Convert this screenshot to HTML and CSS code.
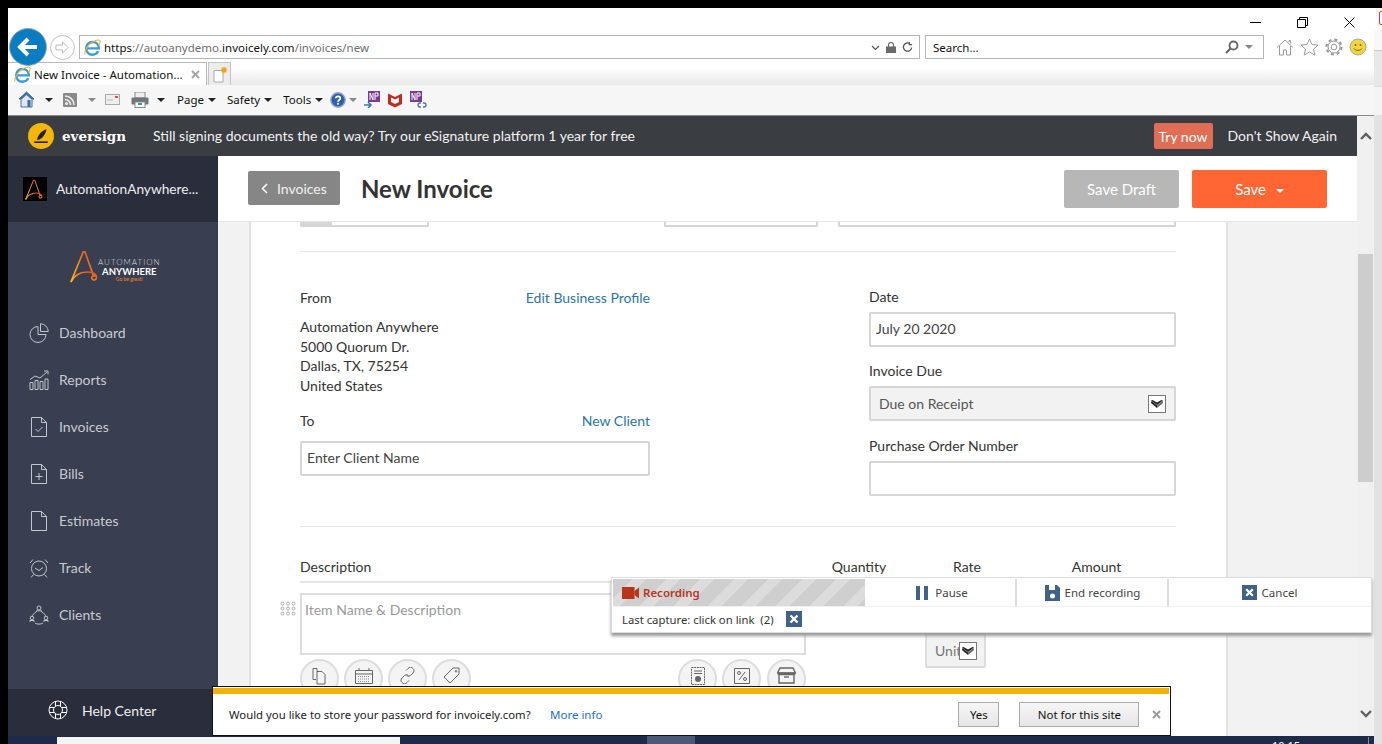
FILE: index.html
```html
<!DOCTYPE html>
<html lang="en">
<head>
  <meta charset="UTF-8" />
  <meta name="viewport" content="width=device-width, initial-scale=1.0" />
  <title>New Invoice - Automation Anywhere</title>
  <link rel="stylesheet" href="styles.css">
</head>
<body>
  <svg class="defs" width="0" height="0">
    <symbol id="ie" viewBox="0 0 20 20">
      <path d="M2.500 11h15C17.500 6.500 14.500 3.500 10 3.500c-4.500 0-7.500 3.500-7.500 7.500s3 7.500 7.500 7.500c3 0 5.500-1.500 6.800-4" fill="none" stroke="#3a9bdc" stroke-width="2.800"/>
      <path d="M1.500 18.500C-1 16 5 6 11 3c4-2 7.500-2.500 8-.5.3 1.500-.8 3.500-1.800 5" fill="none" stroke="#f0b429" stroke-width="1.300"/>
    </symbol>
    <symbol id="a-mark" viewBox="0 0 34 36">
      <path d="M1 35 14.500 2h2L26 29" fill="none" stroke="url(#a-grad)" stroke-width="1.800"/>
      <path d="M1 35c4-8 11-11 18-11 5 0 10 2 10 6 0 3-4 4-5 1-.7-2 1-3 4-3" fill="none" stroke="url(#a-grad)" stroke-width="1.800"/>
    </symbol>
    <linearGradient id="a-grad" x1="0" y1="1" x2="1" y2="0">
      <stop offset="0" stop-color="#ffc21a"/>
      <stop offset="1" stop-color="#e8481c"/>
    </linearGradient>
    <symbol id="caret" viewBox="0 0 16 16">
      <path d="M2 4.500 8 9l6-4.500-1.500-.5L8 6.500 3.500 4z" fill="#222"/>
      <path d="M8 9.500 13.500 5 14 7l-6 5z" fill="#666"/>
      <path d="M8 9.500 2.500 5 2 7l6 5z" fill="#222"/>
    </symbol>
    <symbol id="tbx" viewBox="0 0 16 16">
      <rect width="16" height="16" fill="#40618a"/>
      <path d="m4.500 4.500 7 7m0-7-7 7" stroke="#fff" stroke-width="2.400"/>
    </symbol>
  </svg>

  <div class="screen">
    <div class="desk">
      <div class="ie">
        <div class="titlebar">
          <span class="winbtn"><svg width="11" height="11" viewBox="0 0 11 11"><path d="M0 5.500h11" stroke="#000"/></svg></span>
          <span class="winbtn"><svg width="11" height="11" viewBox="0 0 11 11"><path d="M2.500 2.500v-2h8v8h-2M.500 2.500h8v8h-8z" fill="none" stroke="#000"/></svg></span>
          <span class="winbtn"><svg width="11" height="11" viewBox="0 0 11 11"><path d="m.500.500 10 10m0-10-10 10" stroke="#000"/></svg></span>
        </div>

        <div class="addrrow">
          <span class="nav-back"><svg width="24" height="24" viewBox="0 0 24 24"><path d="M21 12H5M12 4l-8 8 8 8" fill="none" stroke="#fff" stroke-width="4"/></svg></span>
          <span class="nav-fwd"><svg width="15" height="15" viewBox="0 0 16 16"><path d="M1 5.500h7V2l6 6-6 6v-3.500H1z" fill="none" stroke="#b5b5b5"/></svg></span>
          <div class="addr">
            <svg class="ie-icon" width="17" height="17"><use href="#ie"/></svg>
            <span class="url"><b>https</b>://autoanydemo.<b>invoicely.com</b>/invoices/new</span>
            <svg width="9" height="9" viewBox="0 0 9 9"><path d="m1 3 3.500 3.500L8 3" fill="none" stroke="#555" stroke-width="1.200"/></svg>
            <svg width="10" height="11" viewBox="0 0 10 11"><rect y="4.500" width="10" height="6.500" fill="#6a6a6a"/><path d="M2.500 5V3a2.500 2.500 0 0 1 5 0v2" fill="none" stroke="#6a6a6a" stroke-width="1.200"/></svg>
            <svg width="11" height="12" viewBox="0 0 12 12"><path d="M10.500 6.500A4.500 4.500 0 1 1 8.500 2.300M8 .5v3h3" fill="none" stroke="#555" stroke-width="1.400"/></svg>
          </div>
          <div class="search">
            <span class="search-text">Search...</span>
            <svg width="14" height="14" viewBox="0 0 14 14"><circle cx="8.500" cy="5.500" r="4" fill="none" stroke="#666" stroke-width="1.800"/><path d="M5.500 8.500 1 13" stroke="#666" stroke-width="2.200"/></svg>
            <i class="tri tri-grey"></i>
          </div>
          <div class="ie-tools">
            <svg width="18" height="17" viewBox="0 0 18 17"><path d="M1 8.500 9 1l8 7.500M3.500 7v9h4v-5h3v5h4V7M13 3V1.500h1.500V4.500" fill="none" stroke="#9a9a9a"/></svg>
            <svg width="19" height="18" viewBox="0 0 19 18"><path d="m9.500 1 2.500 5.500 6 .6-4.500 4 1.300 6-5.300-3.100-5.300 3.100 1.300-6L1 7.100l6-.6z" fill="none" stroke="#9a9a9a"/></svg>
            <svg width="18" height="18" viewBox="0 0 18 18"><circle cx="9" cy="9" r="2.800" fill="none" stroke="#9a9a9a"/><circle cx="9" cy="9" r="6" fill="none" stroke="#9a9a9a"/><circle cx="9" cy="9" r="7.500" fill="none" stroke="#9a9a9a" stroke-width="2.200" stroke-dasharray="3 2.900"/></svg>
            <svg width="18" height="18" viewBox="0 0 18 18"><circle cx="9" cy="9" r="8" fill="#f2d53c" stroke="#a9a9a9"/><circle cx="6.500" cy="7" r="1" fill="#776a1c"/><circle cx="11.500" cy="7" r="1" fill="#776a1c"/><path d="M5 10.500c1 2.500 7 2.500 8 0" fill="none" stroke="#776a1c"/></svg>
          </div>
        </div>

        <div class="tabrow">
          <div class="tab">
            <svg class="ie-icon" width="17" height="17"><use href="#ie"/></svg>
            <span class="tab-title">New Invoice - Automation...</span>
            <svg width="9" height="9" viewBox="0 0 9 9"><path d="m1 1 7 7m0-7-7 7" stroke="#a5a5a5" stroke-width="2"/></svg>
          </div>
          <div class="newtab"><svg width="16" height="17" viewBox="0 0 16 17"><path d="M2 4.500h9V16H2z" fill="#fff" stroke="#aaa"/><path d="m12 0 .8 2 2-.8-.8 2 2 .8-2 .8.8 2-2-.8-.8 2-.8-2-2 .8.8-2-2-.8 2-.8-.8-2 2 .8z" fill="#f2a31b"/></svg></div>
        </div>

        <div class="cmdbar">
          <svg class="ml3" width="17" height="17" viewBox="0 0 17 17"><path d="M8.500 1 1 8h2v8h11V8h2z" fill="#dfe6ee" stroke="#55708f"/><path d="M8.500 1 1 8h3l4.500-4 4.500 4h3z" fill="#3d6ea5"/><rect x="9.500" y="9" width="3" height="7" fill="#3d6ea5"/></svg>
          <i class="tri ml10"></i>
          <svg class="ml10" width="14" height="14" viewBox="0 0 14 14"><rect width="14" height="14" rx="1" fill="#8a8a8a"/><circle cx="3.500" cy="10.500" r="1.500" fill="#eee"/><path d="M2 6.500a5.500 5.500 0 0 1 5.500 5.500M2 3a9 9 0 0 1 9 9" fill="none" stroke="#eee" stroke-width="1.500"/></svg>
          <i class="tri tri-grey ml11"></i>
          <svg class="ml9" width="15" height="11" viewBox="0 0 15 11"><rect x=".5" y=".5" width="14" height="10" fill="#eee" stroke="#aaa"/><rect x="10" y="2" width="3" height="2" fill="#d9534f"/><path d="M2 6h6" stroke="#bbb"/></svg>
          <svg class="ml11" width="18" height="16" viewBox="0 0 18 16"><rect x="4" y="0" width="10" height="6" fill="#eee" stroke="#888"/><rect x="0.500" y="5.500" width="17" height="7" rx="1" fill="#6f7478"/><rect x="4" y="10" width="10" height="5.500" fill="#fff" stroke="#888"/><path d="M7 12h4" stroke="#3a8fc9" stroke-width="2"/></svg>
          <i class="tri ml8"></i>
          <span class="cmd">Page <i class="tri"></i></span>
          <span class="cmd">Safety <i class="tri"></i></span>
          <span class="cmd">Tools <i class="tri"></i></span>
          <svg class="ml7" width="16" height="16" viewBox="0 0 16 16"><circle cx="8" cy="8" r="7.200" fill="#2e5fb8" stroke="#9aa6b8" stroke-width="1.400"/><path d="M5.800 6.200C6 3.800 10.300 3.800 10.300 6.200 10.300 8 8 8 8 9.800" fill="none" stroke="#fff" stroke-width="1.700"/><rect x="7.100" y="10.800" width="1.800" height="1.800" fill="#fff"/></svg>
          <i class="tri tri-grey ml3"></i>
          <svg class="ml7" width="17" height="17" viewBox="0 0 17 17"><rect x="4" y="0" width="12" height="11" fill="#7b3a96"/><path d="M6 9V2l3 7V2M11 9V2h3v3h-3" fill="none" stroke="#fff"/><path d="M0 14h7M4 11l3 3-3 3" fill="none" stroke="#3d78b5" stroke-width="1.600"/></svg>
          <svg class="ml6" width="16" height="16" viewBox="0 0 16 16"><path d="M1 1.500 8 5l7-3.500V12l-7 3.500L1 12z" fill="#c8281e"/><path d="M4 5.500 8 7.500l4-2V10l-4 2-4-2z" fill="#fff"/></svg>
          <svg class="ml7" width="17" height="17" viewBox="0 0 17 17"><rect x="0" y="0" width="12" height="11" fill="#7b3a96"/><path d="M2 9V2l3 7V2M7 9V2h3v3H7" fill="none" stroke="#fff"/><path d="M8 14a2 2 0 0 1 2-2h1M13 12h1a2 2 0 0 1 0 4h-1M8 14a2 2 0 0 0 2 2h1" fill="none" stroke="#3d78b5" stroke-width="1.300"/></svg>
        </div>

        <div class="page">
          <div class="view">
            <div class="banner">
              <span class="ev-logo"><svg width="18" height="18" viewBox="0 0 16 16"><path d="M13 2C9 3 5 7 4.500 11.500c3.500 0 7-3.500 8.500-9.500z" fill="#222"/><path d="M2 13.500h12" stroke="#222" stroke-width="1.400"/></svg></span>
              <span class="ev-name">eversign</span>
              <span class="ev-text">Still signing documents the old way? Try our eSignature platform 1 year for free</span>
              <button class="try" type="button">Try now</button>
              <span class="noshow">Don't Show Again</span>
            </div>

            <div class="app">
              <aside class="sidebar">
                <div class="account">
                  <span class="acc-logo"><svg width="20" height="21"><use href="#a-mark"/></svg></span>
                  <span class="acc-name">AutomationAnywhere...</span>
                </div>
                <div class="brand">
                  <svg width="31" height="33"><use href="#a-mark"/></svg>
                  <div class="brand-text">
                    <span class="b1">AUTOMATION</span>
                    <span class="b2">ANYWHERE</span>
                    <span class="b3">Go be great!</span>
                  </div>
                </div>
                <nav class="menu">
                  <a class="menu-item"><svg width="20" height="20" viewBox="0 0 20 20"><path d="M9 3.500a8 8 0 1 0 8 8H9z" fill="none" stroke="#c3c6cf"/><path d="M11.500.8c4 0 7.700 3.500 7.700 7.700h-7.700z" fill="none" stroke="#c3c6cf"/></svg>Dashboard</a>
                  <a class="menu-item"><svg width="20" height="20" viewBox="0 0 20 20"><path d="M1 12.500h3v7H1zM6 10.500h3v9H6zM11 11.500h3v8h-3zM16 9h3v10.500h-3zM1 9.500l5-3.500 5 2 7-6M15 1h4v3.500" fill="none" stroke="#c3c6cf"/></svg>Reports</a>
                  <a class="menu-item"><svg width="20" height="20" viewBox="0 0 20 20"><path d="M2.500.5h10l5 5v14h-15zM12.500.5v5h5M6.500 12l2.500 2.500 4.500-4.500" fill="none" stroke="#c3c6cf"/></svg>Invoices</a>
                  <a class="menu-item"><svg width="20" height="20" viewBox="0 0 20 20"><path d="M2.500.5h10l5 5v14h-15zM12.500.5v5h5M10 9v7M6.500 12.500h7" fill="none" stroke="#c3c6cf"/></svg>Bills</a>
                  <a class="menu-item"><svg width="20" height="20" viewBox="0 0 20 20"><path d="M2.500.5h10l5 5v14h-15zM12.500.5v5h5" fill="none" stroke="#c3c6cf"/></svg>Estimates</a>
                  <a class="menu-item"><svg width="20" height="20" viewBox="0 0 20 20"><circle cx="10" cy="10.500" r="7.500" fill="none" stroke="#c3c6cf"/><path d="M6 10l4 2.500 4-3M1 5l3-3.500M19 5l-3-3.500M4.500 16.500 2 19.500M15.500 16.500l2.500 3" fill="none" stroke="#c3c6cf"/></svg>Track</a>
                  <a class="menu-item"><svg width="20" height="20" viewBox="0 0 20 20"><circle cx="10" cy="3" r="2" fill="none" stroke="#c3c6cf"/><circle cx="3" cy="13" r="1.800" fill="none" stroke="#c3c6cf"/><circle cx="17" cy="13" r="1.800" fill="none" stroke="#c3c6cf"/><path d="M7 7c-2 1-3.500 3-4 5M13 7c2 1 3.500 3 4 5M1 17v-1.500h4V17M15 17v-1.500h4V17M6 18c2 1.500 6 1.500 8 0M7.500 7V5.800h5V7" fill="none" stroke="#c3c6cf"/></svg>Clients</a>
                </nav>
                <a class="help"><svg width="20" height="20" viewBox="0 0 20 20"><circle cx="10" cy="10" r="9" fill="none" stroke="#fff"/><circle cx="10" cy="10" r="4.500" fill="none" stroke="#fff"/><path d="M7.500 1.500v4.500M12.500 1.500v4.500M7.500 14v4.500M12.500 14v4.500M1.500 7.500H6M1.500 12.500H6M14 7.500h4.500M14 12.500h4.500" stroke="#fff"/></svg>Help Center</a>
              </aside>

              <main class="main">
                <header class="head">
                  <a class="back"><svg width="7" height="11" viewBox="0 0 7 11"><path d="M6 1 1.500 5.500 6 10" fill="none" stroke="#fff" stroke-width="1.500"/></svg>Invoices</a>
                  <h1 class="head-title">New Invoice</h1>
                  <button class="draft" type="button">Save Draft</button>
                  <button class="save" type="button">Save <i class="tri tri-white"></i></button>
                </header>

                <div class="canvas">
                  <div class="card">
                    <div class="stubs">
                      <span class="stub stub-a"><i></i></span>
                      <span class="stub stub-b"></span>
                      <span class="stub stub-c"></span>
                    </div>
                    <hr class="rule rule-top">

                    <div class="bill">
                      <section class="bill-left">
                        <div class="label-row"><span class="label">From</span><a class="link">Edit Business Profile</a></div>
                        <div class="address">
                          <div>Automation Anywhere</div>
                          <div>5000 Quorum Dr.</div>
                          <div>Dallas, TX, 75254</div>
                          <div>United States</div>
                        </div>
                        <div class="label-row to-row"><span class="label">To</span><a class="link">New Client</a></div>
                        <input class="field client" type="text" placeholder="Enter Client Name">
                      </section>
                      <section class="bill-right">
                        <div class="label">Date</div>
                        <input class="field" type="text" value="July 20 2020">
                        <div class="label gap14">Invoice Due</div>
                        <div class="field picker">Due on Receipt<span class="pick-arrow"><svg width="16" height="16"><use href="#caret"/></svg></span></div>
                        <div class="label gap15">Purchase Order Number</div>
                        <input class="field" type="text">
                      </section>
                    </div>

                    <hr class="rule rule-mid">

                    <div class="items-head">
                      <span class="label col-desc">Description</span>
                      <span class="label col-qty">Quantity</span>
                      <span class="label col-rate">Rate</span>
                      <span class="label col-amt">Amount</span>
                    </div>

                    <div class="item">
                      <div class="item-left">
                        <svg class="drag" width="16" height="15" viewBox="0 0 16 15"><g fill="none" stroke="#aaa"><circle cx="2.500" cy="2.500" r="1.500"/><circle cx="8" cy="2.500" r="1.500"/><circle cx="13.500" cy="2.500" r="1.500"/><circle cx="2.500" cy="7.500" r="1.500"/><circle cx="8" cy="7.500" r="1.500"/><circle cx="13.500" cy="7.500" r="1.500"/><circle cx="2.500" cy="12.500" r="1.500"/><circle cx="8" cy="12.500" r="1.500"/><circle cx="13.500" cy="12.500" r="1.500"/></g></svg>
                        <textarea class="item-name" placeholder="Item Name &amp; Description"></textarea>
                        <div class="item-tools">
                          <span class="round"><svg width="16" height="18" viewBox="0 0 16 18"><path d="M5 4.500V1.500H1v11h3M5 4.500h5l3 3v9.500H5z" fill="none" stroke="#666"/></svg></span>
                          <span class="round"><svg width="18" height="16" viewBox="0 0 18 16"><path d="M.5 2.500h17v13H.5zM.5 6h17M4 0v3M14 0v3" fill="none" stroke="#666"/><path d="M3 8.500h12M3 11h12M3 13.500h12" stroke="#888" stroke-dasharray="1 1"/></svg></span>
                          <span class="round"><svg width="17" height="17" viewBox="0 0 17 17"><path d="m7 3.500 2-2a3 3 0 0 1 5 0 3 3 0 0 1 0 4.500l-2.500 2.500a3 3 0 0 1-4 0M10 13.500l-2 2a3 3 0 0 1-5 0 3 3 0 0 1 0-4.500L5.500 8.500a3 3 0 0 1 4 0" fill="none" stroke="#666"/></svg></span>
                          <span class="round"><svg width="17" height="17" viewBox="0 0 17 17"><path d="M10 1h6v6l-9 9-6-6zM13 3.500a.8.8 0 1 1 0 1.600.8.8 0 0 1 0-1.600z" fill="none" stroke="#666"/></svg></span>
                          <span class="round round-sep"><svg width="14" height="18" viewBox="0 0 14 18"><path d="M.5.500h13v17H.5z" fill="none" stroke="#666" stroke-dasharray="2 .7"/><path d="M3 4h8M3 6.500h8" stroke="#666"/><circle cx="7" cy="12" r="3" fill="#666"/></svg></span>
                          <span class="round"><svg width="16" height="16" viewBox="0 0 16 16"><path d="M.5.500h15v15H.5zM11 4l-6 8" fill="none" stroke="#666"/><circle cx="5" cy="5" r="1.500" fill="none" stroke="#666"/><circle cx="11" cy="11" r="1.500" fill="none" stroke="#666"/></svg></span>
                          <span class="round round-last"><svg width="19" height="17" viewBox="0 0 19 17"><path d="M3 1h13l2.500 5H.5zM2 7.500h15V16H2z" fill="none" stroke="#666" stroke-width="1.400"/><path d="M.5 6.500h18" stroke="#666" stroke-width="2"/><path d="M7 10h5" stroke="#666" stroke-width="1.400"/></svg></span>
                        </div>
                      </div>
                      <div class="unit">Unit<span class="pick-arrow"><svg width="16" height="16"><use href="#caret"/></svg></span></div>
                    </div>
                  </div>
                </div>
              </main>
            </div>
          </div>

          <div class="scroll">
            <svg class="chev-up" width="12" height="8" viewBox="0 0 12 8"><path d="m1 7 5-5 5 5" fill="none" stroke="#606060" stroke-width="2.400"/></svg>
            <div class="thumb"></div>
            <svg class="chev-down" width="12" height="8" viewBox="0 0 12 8"><path d="m1 1 5 5 5-5" fill="none" stroke="#606060" stroke-width="2.400"/></svg>
          </div>
        </div>
      </div>

      <div class="taskbar">
        <span class="task-open"></span>
        <span class="task-lit"></span>
        <span class="clock">10:15</span>
        <span class="task-show"></span>
      </div>
    </div>

    <div class="behind">
      <div class="behind-top"><span class="behind-red"></span></div>
      <div class="behind-a"></div>
      <div class="behind-b"></div>
      <div class="behind-c"></div>
      <div class="behind-d"></div>
    </div>

    <div class="recorder">
      <div class="rec-top">
        <div class="rec-status"><svg width="18" height="12" viewBox="0 0 18 12"><rect width="12.500" height="12" fill="#b8351c"/><path d="M12.500 4 17 .5v11L12.500 8z" fill="#b8351c"/></svg>Recording</div>
        <div class="rec-btn rec-pause"><svg width="12" height="14" viewBox="0 0 12 14"><path d="M0 0h4v14H0zM8 0h4v14H8z" fill="#40618a"/></svg>Pause</div>
        <div class="rec-btn rec-end"><svg width="15" height="16" viewBox="0 0 15 16"><path d="M0 0h12l3 3v13H0z" fill="#40618a"/><rect x="4" y="0" width="6" height="5" fill="#fff"/><circle cx="7.500" cy="11" r="2.500" fill="#fff"/></svg>End recording</div>
        <div class="rec-btn rec-cancel"><svg width="15" height="15"><use href="#tbx"/></svg>Cancel</div>
      </div>
      <div class="rec-bottom">Last capture: click on link&nbsp; (2)<svg width="16" height="16"><use href="#tbx"/></svg></div>
    </div>

    <div class="passbar">
      <div class="pass-strip"></div>
      <div class="pass-body">
        <span class="pass-q">Would you like to store your password for invoicely.com?</span>
        <a class="pass-more">More info</a>
        <button class="pass-btn pass-yes" type="button">Yes</button>
        <button class="pass-btn pass-no" type="button">Not for this site</button>
        <svg class="pass-x" width="9" height="9" viewBox="0 0 9 9"><path d="m1 1 7 7m0-7-7 7" stroke="#9a9a9a" stroke-width="2"/></svg>
      </div>
    </div>
  </div>
</body>
</html>
```

FILE: styles.css
```css
* {
  box-sizing: border-box;
}
html, body {
  margin: 0;
  height: 100%;
  overflow: hidden;
  background: #000;
}
body {
  font-family: "Lato", Arial, sans-serif;
  color: #333;
}
.defs {
  position: absolute;
}
.screen {
  position: relative;
  width: 1382px;
  height: 744px;
  padding: 8px 0 0 8px;
  display: flex;
  overflow: hidden;
  background: #000;
}
.desk {
  width: 1366px;
  display: flex;
  flex-direction: column;
}
.ie {
  height: 728px;
  display: flex;
  flex-direction: column;
  background: #fff;
  font-family: "Noto Sans", Arial, sans-serif;
  font-size: 11.5px;
  color: #111;
}

/* browser chrome */
.titlebar {
  height: 24px;
  flex: none;
  display: flex;
  justify-content: flex-end;
  padding-right: 1px;
}
.winbtn {
  width: 47px;
  height: 24px;
  padding-top: 4px;
  display: flex;
  align-items: center;
  justify-content: center;
}
.addrrow {
  position: relative;
  z-index: 1;
  height: 30px;
  flex: none;
  display: flex;
  align-items: center;
}
.nav-back {
  width: 38px;
  height: 38px;
  margin-left: 1px;
  border-radius: 50%;
  background: #0a7cc1;
  border: 1px solid #9ab;
  display: flex;
  align-items: center;
  justify-content: center;
}
.nav-fwd {
  width: 25px;
  height: 25px;
  margin-left: 3px;
  border-radius: 50%;
  border: 1px solid #c4c4c4;
  display: flex;
  align-items: center;
  justify-content: center;
}
.addr {
  width: 841px;
  height: 24px;
  margin-left: 4px;
  padding: 0 6px 0 4px;
  border: 1px solid #b5b5b5;
  display: flex;
  align-items: center;
  gap: 3px;
}
.addr svg + svg {
  margin-left: 3px;
}
.url {
  flex: 1;
  color: #6d6d6d;
}
.url b {
  font-weight: 400;
  color: #111;
}
.search {
  width: 339px;
  height: 24px;
  margin-left: 5px;
  padding: 0 10px 0 7px;
  border: 1px solid #b5b5b5;
  display: flex;
  align-items: center;
  gap: 6px;
}
.search-text {
  flex: 1;
}
.ie-tools {
  margin-left: 12px;
  display: flex;
  align-items: center;
  gap: 6px;
}
.tabrow {
  height: 23px;
  flex: none;
  display: flex;
  background: linear-gradient(#fff 20%, #e9e9e9);
}
.tab {
  width: 199px;
  padding: 0 6px;
  background: #fff;
  border: 1px solid #b9b9b9;
  border-bottom: 0;
  border-left-width: 0;
  display: flex;
  align-items: center;
  gap: 3px;
}
.tab-title {
  flex: 1;
  white-space: nowrap;
}
.newtab {
  width: 23px;
  margin-left: 1px;
  background: #ececec;
  border: 1px solid #c4c4c4;
  border-bottom: 0;
  display: flex;
  align-items: center;
  justify-content: center;
}
.cmdbar {
  height: 31px;
  flex: none;
  padding: 0 0 1px 7px;
  background: #f6f6f6;
  border-bottom: 1px solid #8a8a8a;
  display: flex;
  align-items: center;
}
.cmd {
  margin-left: 11px;
  display: flex;
  align-items: center;
  gap: 4px;
}
.cmd:first-of-type {
  margin-left: 12px;
}
.tri {
  display: inline-block;
  width: 0;
  height: 0;
  border-left: 4px solid transparent;
  border-right: 4px solid transparent;
  border-top: 4px solid #222;
}
.tri-grey {
  border-top-color: #888;
}
.tri-white {
  border-top-color: #fff;
}
.ml3 { margin-left: 3px; }
.ml6 { margin-left: 6px; }
.ml7 { margin-left: 7px; }
.ml8 { margin-left: 8px; }
.ml9 { margin-left: 9px; }
.ml10 { margin-left: 10px; }
.ml11 { margin-left: 11px; }

/* page */
.page {
  flex: 1;
  min-height: 0;
  display: flex;
  font-family: "Lato", Arial, sans-serif;
  font-size: 14px;
  color: #333;
}
.view {
  width: 1349px;
  display: flex;
  flex-direction: column;
}
.scroll {
  width: 17px;
  background: #f0f0f0;
  display: flex;
  flex-direction: column;
  align-items: center;
}
.chev-up {
  margin-top: 16px;
}
.thumb {
  width: 15px;
  height: 228px;
  margin-top: 114px;
  background: #cdcdcd;
}
.chev-down {
  margin-top: 228px;
}
.banner {
  height: 40px;
  flex: none;
  background: #3a3d42;
  color: #f2f2f2;
  display: flex;
  align-items: center;
}
.ev-logo {
  width: 26px;
  height: 26px;
  margin-left: 20px;
  border-radius: 50%;
  background: #f5b60c;
  display: flex;
  align-items: center;
  justify-content: center;
}
.ev-name {
  width: 91px;
  margin-left: 8px;
  font-family: "DejaVu Serif", serif;
  font-weight: 700;
  font-size: 13.5px;
  color: #fff;
}
.ev-text {
  flex: 1;
  padding-bottom: 2px;
  white-space: nowrap;
}
.try {
  width: 59px;
  height: 26px;
  padding: 0;
  border: 0;
  border-radius: 2px;
  background: #e06e54;
  color: #fff;
  font: inherit;
}
.noshow {
  margin-left: 15px;
  margin-right: 20px;
  padding-bottom: 1px;
}
.app {
  flex: 1;
  min-height: 0;
  display: flex;
}

/* sidebar */
.sidebar {
  width: 210px;
  flex: none;
  background: #393e50;
  display: flex;
  flex-direction: column;
}
.account {
  height: 66px;
  flex: none;
  padding-left: 15px;
  background: #2a2d3c;
  display: flex;
  align-items: center;
  gap: 9px;
}
.acc-logo {
  width: 24px;
  height: 24px;
  background: #000;
  display: flex;
  align-items: center;
  justify-content: center;
}
.acc-name {
  padding-bottom: 2px;
  font-size: 13.7px;
  color: #eee;
  white-space: nowrap;
}
.brand {
  height: 36px;
  margin-top: 28px;
  padding-left: 62px;
  display: flex;
}
.brand-text {
  display: flex;
  flex-direction: column;
  align-items: center;
  margin-left: -3px;
  padding-top: 8px;
  line-height: 9px;
}
.b1 {
  font-size: 8px;
  letter-spacing: 1px;
  font-weight: 300;
  color: #ddd;
}
.b2 {
  font-size: 9.5px;
  font-weight: 700;
  color: #fff;
}
.b3 {
  font-size: 5px;
  line-height: 6px;
  color: #f08a24;
}
.menu {
  margin-top: 23px;
}
.menu-item {
  height: 47px;
  padding-left: 21px;
  color: #c8cad2;
  display: flex;
  align-items: center;
  gap: 10px;
}
.help {
  height: 47px;
  margin-top: auto;
  padding: 0 0 5px 40px;
  background: #2a2d3c;
  color: #eee;
  display: flex;
  align-items: center;
  gap: 14px;
}

/* main */
.main {
  flex: 1;
  min-width: 0;
  display: flex;
  flex-direction: column;
  background: #f2f2f2;
}
.head {
  height: 66px;
  flex: none;
  padding: 0 30px;
  background: #fff;
  border-bottom: 1px solid #e6e6e6;
  display: flex;
  align-items: center;
}
.back {
  width: 92px;
  height: 34px;
  margin-top: -1px;
  padding-left: 13px;
  border-radius: 2px;
  background: #868686;
  color: #f2f2f2;
  display: flex;
  align-items: center;
  gap: 9px;
}
.head-title {
  flex: 1;
  margin: 0 0 0 21px;
  font-size: 24px;
  font-weight: 700;
  color: #333;
}
.draft, .save {
  height: 38px;
  border: 0;
  border-radius: 2px;
  color: #fff;
  font: inherit;
  font-size: 15px;
}
.draft {
  width: 115px;
  background: #b7b7b7;
}
.save {
  width: 135px;
  margin-left: 13px;
  background: #ff6633;
}
.save .tri {
  margin-left: 6px;
  vertical-align: 2px;
}
.canvas {
  flex: 1;
  min-height: 0;
  overflow: hidden;
}
.card {
  width: 979px;
  height: 100%;
  margin-left: 31px;
  padding: 0 50px 0 49px;
  background: #fff;
  border-left: 2px solid #e2e2e2;
  border-right: 2px solid #e2e2e2;
}
.stubs {
  height: 5px;
  display: flex;
}
.stub {
  display: block;
  height: 5px;
  border: 2px solid #d6d6d6;
  border-top: 0;
  border-radius: 0 0 2px 2px;
}
.stub i {
  display: block;
  width: 30px;
  height: 3px;
  background: #d6d6d6;
}
.stub-a { width: 129px; }
.stub-b { width: 154px; margin-left: 235px; }
.stub-c { width: 338px; margin-left: 20px; }
.rule {
  height: 1px;
  margin: 0;
  border: 0;
  background: #e6e6e6;
}
.rule-top { margin-top: 24px; }
.rule-mid { margin-top: 30px; }
.bill {
  padding-top: 36px;
  display: flex;
  justify-content: space-between;
}
.bill-left {
  width: 350px;
}
.bill-right {
  width: 307px;
  margin-top: -1px;
}
.label-row {
  display: flex;
  justify-content: space-between;
}
.label {
  display: block;
  line-height: 20px;
  color: #333;
}
.link {
  line-height: 20px;
  color: #2a76a8;
}
.address {
  margin-top: 9px;
  line-height: 19.5px;
}
.to-row {
  margin-top: 16px;
}
.field {
  display: block;
  width: 100%;
  height: 35px;
  margin-top: 5px;
  padding: 0 5px 2px;
  background: #fff;
  border: 2px solid #d6d6d6;
  border-radius: 2px;
  outline: 0;
  font: inherit;
  color: #444;
}
.field::placeholder {
  color: #444;
  opacity: 1;
}
.client {
  margin-top: 10px;
}
.gap14 { margin-top: 14px; }
.gap15 { margin-top: 15px; }
.picker {
  padding: 0 8px;
  background: #f2f2f2;
  color: #555;
  display: flex;
  align-items: center;
  justify-content: space-between;
}
.pick-arrow {
  width: 18px;
  height: 18px;
  background: #fff;
  border: 1px solid #777;
  display: flex;
  align-items: center;
  justify-content: center;
  flex: none;
}
.items-head {
  margin-top: 30px;
  padding-bottom: 4px;
  border-bottom: 2px solid #e6e6e6;
  display: flex;
}
.col-desc { width: 506px; }
.col-qty { width: 106px; text-align: center; }
.col-rate { width: 110px; text-align: center; }
.col-amt { width: 149px; text-align: center; }
.item {
  margin-top: 10px;
  display: flex;
}
.item-left {
  position: relative;
  width: 506px;
}
.drag {
  position: absolute;
  left: -20px;
  top: 8px;
}
.item-name {
  display: block;
  width: 100%;
  height: 62px;
  padding: 6px 3px;
  border: 2px solid #ddd;
  border-radius: 0;
  outline: 0;
  resize: none;
  font: inherit;
}
.item-name::placeholder {
  color: #999;
  opacity: 1;
}
.item-tools {
  margin-top: 4px;
  display: flex;
  gap: 5px;
}
.round {
  width: 39px;
  height: 39px;
  flex: none;
  padding-bottom: 6px;
  border: 2px solid #ddd;
  border-radius: 50%;
  background: #f4f4f4;
  display: flex;
  align-items: center;
  justify-content: center;
}
.round-sep {
  margin-left: 202px;
}
.round-last {
  margin-left: 1px;
}
.unit {
  width: 61px;
  height: 35px;
  margin: 40px 0 0 119px;
  padding-left: 8px;
  border: 2px solid #ddd;
  border-radius: 2px;
  background: #f2f2f2;
  color: #777;
  display: flex;
  align-items: center;
  overflow: hidden;
}
.unit .pick-arrow {
  margin-left: -2px;
}

/* taskbar, and the window behind */
.taskbar {
  height: 8px;
  flex: none;
  padding-top: 1px;
  background: #1e2a4a;
  display: flex;
  overflow: hidden;
}
.task-open {
  width: 343px;
  margin-left: 49px;
  background: #f4f4f4;
}
.task-lit {
  width: 48px;
  margin-left: 247px;
  margin-top: -1px;
  background: #4b5878;
}
.clock {
  margin: 3px 0 0 577px;
  font-family: "Noto Sans", Arial, sans-serif;
  font-size: 11px;
  line-height: 11px;
  color: #fff;
}
.task-show {
  width: 1px;
  margin-left: 68px;
  background: #7f8aa5;
}
.behind {
  flex: 1;
  display: flex;
  flex-direction: column;
  overflow: hidden;
}
.behind-top {
  height: 23px;
  padding: 3px 0 0 5px;
  background: #fff;
}
.behind-red {
  display: block;
  width: 12px;
  height: 14px;
  border: 1px solid #e33;
  border-radius: 2px;
}
.behind-a { height: 19px; background: #f8f8f8; }
.behind-b { height: 36px; background: #e8e8e8; border-top: 1px solid #ccc; }
.behind-c { height: 29px; background: #f4f4f4; border-top: 1px solid #ddd; }
.behind-d { flex: 1; background: #e2e2e2; }

/* overlays */
.recorder {
  position: absolute;
  left: 611px;
  top: 577px;
  width: 761px;
  height: 56px;
  padding: 1px;
  background: #fff;
  border: 1px solid #ddd;
  box-shadow: 0 3px 3px #999;
  font-family: "Noto Sans", Arial, sans-serif;
  font-size: 11.5px;
  color: #444;
}
.rec-top {
  height: 28px;
  display: flex;
  border-bottom: 1px solid #f0f0f0;
}
.rec-status {
  width: 252px;
  padding-left: 9px;
  background: repeating-linear-gradient(135deg, #cfcfcf 0 14px, #dcdcdc 14px 24px);
  color: #b8351c;
  font-weight: 600;
  display: flex;
  align-items: center;
  gap: 3px;
}
.rec-btn {
  display: flex;
  align-items: center;
  justify-content: center;
  gap: 5px;
}
.rec-pause { width: 152px; padding-left: 4px; gap: 7px; border-right: 2px solid #ddd; }
.rec-end { width: 152px; padding-left: 1px; border-right: 2px solid #ddd; }
.rec-cancel { flex: 1; }
.rec-bottom {
  height: 24px;
  padding-left: 9px;
  font-size: 11.3px;
  color: #333;
  display: flex;
  align-items: center;
  gap: 12px;
}
.passbar {
  position: absolute;
  left: 212px;
  top: 686px;
  width: 959px;
  height: 50px;
  padding: 1px 1px 1px 0;
  background: #fff;
  border: 1px solid #111;
  font-family: "Noto Sans", Arial, sans-serif;
  font-size: 11.5px;
  color: #222;
}
.pass-strip {
  height: 6px;
  background: #f3b100;
}
.pass-body {
  height: 40px;
  padding-left: 16px;
  display: flex;
  align-items: center;
}
.pass-q {
  width: 321px;
  font-size: 11.35px;
  white-space: nowrap;
}
.pass-more {
  color: #1a6fd0;
}
.pass-btn {
  height: 25px;
  padding: 0;
  background: linear-gradient(#f6f6f6, #e6e6e6);
  border: 1px solid #aaa;
  font: inherit;
  color: #111;
}
.pass-yes {
  width: 41px;
  margin-left: 356px;
}
.pass-no {
  width: 120px;
  margin-left: 20px;
}
.pass-x {
  margin-left: 13px;
}
```
